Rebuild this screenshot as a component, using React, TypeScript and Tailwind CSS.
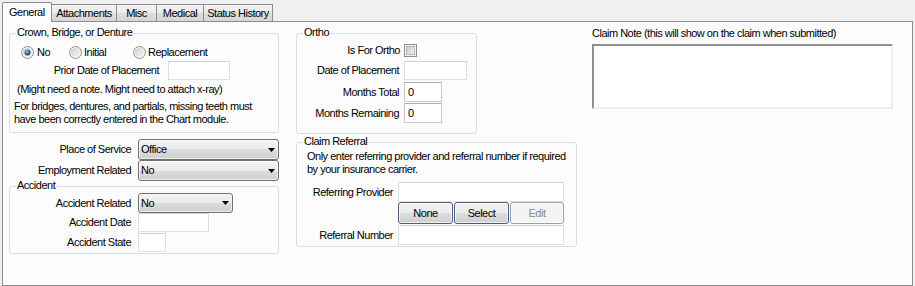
import type { ReactNode } from "react";

const GRAD = "bg-[linear-gradient(to_bottom,#f2f2f2_0%,#ebebeb_50%,#dddddd_50%,#cfcfcf_100%)]";

function GroupBox({ title, className = "", children }: { title: string; className?: string; children: ReactNode }) {
  return (
    <div className={`relative rounded-[3px] border border-[#d5dfe5] ${className}`}>
      <span className="absolute left-[6px] top-[-8px] bg-[#fcfcfc] px-[1px] leading-[13px]">{title}</span>
      {children}
    </div>
  );
}

function TextBox({ className = "", value, dark }: { className?: string; value?: string; dark?: boolean }) {
  return (
    <div
      className={`flex items-center border bg-white pl-[3px] ${dark ? "border-[#c5c9cf] border-t-[#abadb3]" : "border-[#dcdfe3] border-t-[#cfd2d7]"} ${className}`}
    >
      {value}
    </div>
  );
}

function Combo({ className = "", value }: { className?: string; value: string }) {
  return (
    <div className={`flex items-center justify-between rounded-[3px] border border-[#707070] pl-[2px] pr-[3px] shadow-[inset_0_0_0_1px_rgba(255,255,255,0.65)] ${GRAD} ${className}`}>
      <span>{value}</span>
      <svg width="7" height="4" viewBox="0 0 7 4">
        <path d="M0 0H7L3.5 4Z" fill="#000" />
      </svg>
    </div>
  );
}

function Radio({ checked }: { checked?: boolean }) {
  return (
    <svg width="13" height="13" viewBox="0 0 13 13" className="shrink-0">
      <defs>
        <linearGradient id="rg" x1="0" y1="0" x2="1" y2="1">
          <stop offset="0" stopColor="#cfcfcf" />
          <stop offset="1" stopColor="#f8f8f8" />
        </linearGradient>
        <radialGradient id="rd" cx=".4" cy=".35" r=".7">
          <stop offset="0" stopColor="#a6d4f2" />
          <stop offset=".55" stopColor="#2d6aa3" />
          <stop offset="1" stopColor="#163f66" />
        </radialGradient>
      </defs>
      <circle cx="6.5" cy="6.5" r="6" fill="#f4f4f4" stroke="#8e8f8f" />
      <circle cx="6.5" cy="6.5" r="4.5" fill="url(#rg)" />
      {checked && <circle cx="6.5" cy="6.5" r="3" fill="url(#rd)" />}
    </svg>
  );
}

function Check() {
  return (
    <svg width="13" height="13" viewBox="0 0 13 13" className="shrink-0">
      <defs>
        <linearGradient id="cg" x1="0" y1="0" x2="1" y2="1">
          <stop offset="0" stopColor="#c6cad0" />
          <stop offset="1" stopColor="#f4f4f4" />
        </linearGradient>
      </defs>
      <rect x=".5" y=".5" width="12" height="12" fill="#f4f4f4" stroke="#8e8f8f" />
      <rect x="2.5" y="2.5" width="8" height="8" fill="url(#cg)" stroke="#b3b7bd" />
    </svg>
  );
}

function Btn({ label, disabled, className = "" }: { label: string; disabled?: boolean; className?: string }) {
  return (
    <div
      className={`flex items-center justify-center rounded-[3px] border shadow-[inset_0_0_0_1px_rgba(255,255,255,0.7)] ${disabled ? "border-[#8ea3b8] bg-[#f4f4f4] text-[#8a8a8a]" : `border-[#4a5e7a] ${GRAD}`} ${className}`}
    >
      {label}
    </div>
  );
}

const TABS = [
  { label: "Attachments", w: "w-[65px]" },
  { label: "Misc", w: "w-[40px]" },
  { label: "Medical", w: "w-[47px]" },
  { label: "Status History", w: "w-[69px]" },
];

export default function App() {
  return (
    <div className="h-[286px] w-[915px] overflow-hidden bg-[#f0f0f0] font-['Liberation_Sans',Arial,sans-serif] text-[11px] leading-[13px] tracking-[-0.5px] text-black">
      {/* tabs */}
      <div className="flex h-[21px] items-end pl-[2px]">
        <div className="relative z-10 -mb-px h-[20px] w-[50px] rounded-t-[2px] border border-b-0 border-[#898c95] bg-[#fcfcfc] pl-[6px] pt-[3px]">
          General
        </div>
        {TABS.map((t) => (
          <div
            key={t.label}
            className={`h-[17px] ${t.w} border-r border-t border-[#898c95] bg-[linear-gradient(to_bottom,#f3f3f3_0%,#ebebeb_50%,#dedede_50%,#d6d6d6_100%)] pt-[2px] text-center`}
          >
            {t.label}
          </div>
        ))}
      </div>

      {/* tab page */}
      <div className="ml-[2px] flex h-[265px] w-[911px] border border-[#898c95] bg-[#fcfcfc]">
        {/* column 1 */}
        <div className="ml-[6px] mt-[11px] flex w-[270px] flex-col">
          <GroupBox title="Crown, Bridge, or Denture" className="h-[100px]">
            <div className="mt-[12px] flex h-[13px] items-center pl-[11px]">
              <div className="flex w-[48px] items-center gap-[3px]">
                <Radio checked />
                <span>No</span>
              </div>
              <div className="flex w-[64px] items-center gap-[2px]">
                <Radio />
                <span>Initial</span>
              </div>
              <div className="flex items-center gap-[2px]">
                <Radio />
                <span>Replacement</span>
              </div>
            </div>
            <div className="mt-[2px] flex items-center">
              <span className="w-[149px] text-right">Prior Date of Placement</span>
              <TextBox className="ml-[9px] h-[19px] w-[62px]" />
            </div>
            <div className="mt-[3px] pl-[7px]">(Might need a note. Might need to attach x-ray)</div>
            <div className="mt-[4px] whitespace-nowrap pl-[4px]">
              For bridges, dentures, and partials, missing teeth must
              <br />
              have been correctly entered in the Chart module.
            </div>
          </GroupBox>

          <div className="mt-[6px] flex items-center">
            <span className="w-[122px] text-right">Place of Service</span>
            <Combo className="ml-[7px] h-[21px] w-[141px]" value="Office" />
          </div>
          <div className="flex items-center">
            <span className="w-[122px] text-right">Employment Related</span>
            <Combo className="ml-[7px] h-[21px] w-[141px]" value="No" />
          </div>

          <GroupBox title="Accident" className="mt-[5px] h-[68px]">
            <div className="mt-[6px] flex items-center">
              <span className="w-[121px] text-right">Accident Related</span>
              <Combo className="ml-[7px] h-[20px] w-[95px]" value="No" />
            </div>
            <div className="flex items-center">
              <span className="w-[121px] text-right">Accident Date</span>
              <TextBox className="ml-[7px] h-[19px] w-[71px]" />
            </div>
            <div className="mt-[1px] flex items-center">
              <span className="w-[121px] text-right">Accident State</span>
              <TextBox className="ml-[7px] h-[19px] w-[28px]" />
            </div>
          </GroupBox>
        </div>

        {/* column 2 */}
        <div className="ml-[17px] mt-[11px] flex w-[281px] flex-col">
          <GroupBox title="Ortho" className="h-[101px] w-[181px]">
            <div className="mt-[10px] flex items-center">
              <span className="w-[103px] text-right">Is For Ortho</span>
              <span className="ml-[4px]">
                <Check />
              </span>
            </div>
            <div className="mt-[4px] flex items-center">
              <span className="w-[102px] text-right">Date of Placement</span>
              <TextBox className="ml-[5px] h-[19px] w-[63px]" />
            </div>
            <div className="mt-[2px] flex items-center">
              <span className="w-[102px] text-right">Months Total</span>
              <TextBox dark className="ml-[5px] h-[20px] w-[38px]" value="0" />
            </div>
            <div className="mt-[1px] flex items-center">
              <span className="w-[102px] text-right">Months Remaining</span>
              <TextBox dark className="ml-[5px] h-[20px] w-[38px]" value="0" />
            </div>
          </GroupBox>

          <GroupBox title="Claim Referral" className="mt-[8px] h-[105px]">
            <div className="mt-[7px] whitespace-nowrap pl-[10px]">
              Only enter referring provider and referral number if required
              <br />
              by your insurance carrier.
            </div>
            <div className="mt-[6px] flex items-center">
              <span className="w-[96px] text-right">Referring Provider</span>
              <TextBox className="ml-[5px] h-[20px] w-[166px]" />
            </div>
            <div className="flex gap-[1px] pl-[101px]">
              <Btn label="None" className="h-[22px] w-[55px]" />
              <Btn label="Select" className="h-[22px] w-[55px]" />
              <Btn label="Edit" disabled className="h-[22px] w-[54px]" />
            </div>
            <div className="mt-[1px] flex items-center">
              <span className="w-[96px] text-right">Referral Number</span>
              <TextBox className="ml-[5px] h-[20px] w-[166px]" />
            </div>
          </GroupBox>
        </div>

        {/* column 3 */}
        <div className="ml-[15px] mt-[5px] flex flex-col">
          <span>Claim Note (this will show on the claim when submitted)</span>
          <div className="mt-[4px] h-[65px] w-[301px] border-2 border-b-[#ececec] border-l-[#8f8f8f] border-r-[#ececec] border-t-[#8f8f8f] bg-white" />
        </div>
      </div>
    </div>
  );
}
